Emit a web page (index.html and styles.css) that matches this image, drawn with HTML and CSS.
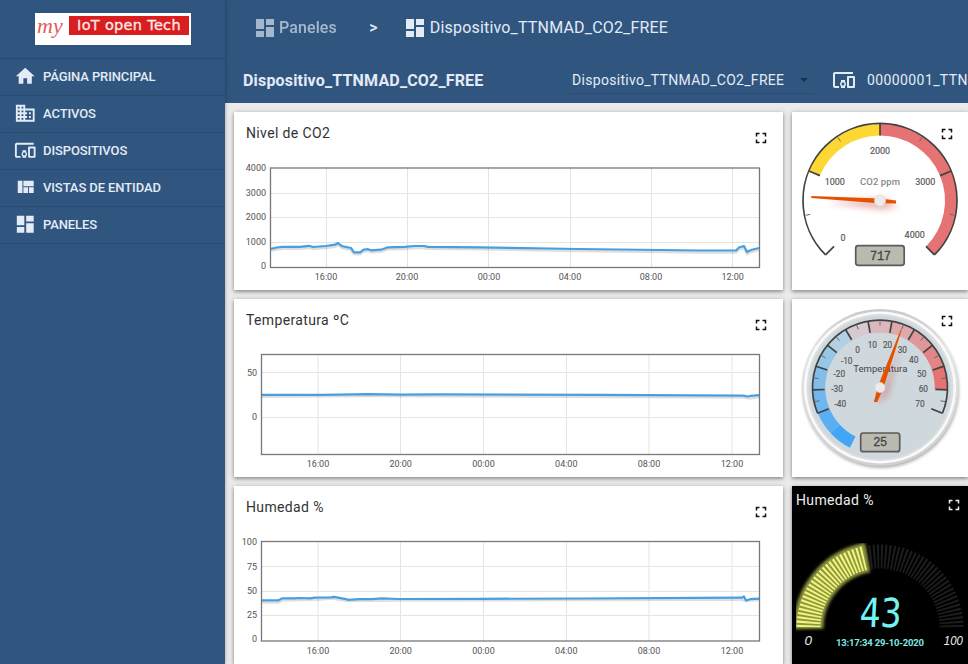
FILE: index.html
```html
<!DOCTYPE html>
<html lang="es">
<head>
<meta charset="utf-8">
<title>Dispositivo_TTNMAD_CO2_FREE</title>
<link rel="stylesheet" href="styles.css">
</head>
<body>
<svg class="defs" width="0" height="0" aria-hidden="true">
  <defs>
    <symbol id="i-home" viewBox="0 0 24 24"><path d="M10 20v-6h4v6h5v-8h3L12 3 2 12h3v8z"/></symbol>
    <symbol id="i-domain" viewBox="0 0 24 24"><path d="M12 7V3H2v18h20V7H12zM6 19H4v-2h2v2zm0-4H4v-2h2v2zm0-4H4V9h2v2zm0-4H4V5h2v2zm4 12H8v-2h2v2zm0-4H8v-2h2v2zm0-4H8V9h2v2zm0-4H8V5h2v2zm10 12h-8v-2h2v-2h-2v-2h2v-2h-2V9h8v10zm-2-8h-2v2h2v-2zm0 4h-2v2h2v-2z"/></symbol>
    <symbol id="i-devices" viewBox="0 0 24 24"><path d="M3 6h18V4H3c-1.100 0-2 .9-2 2v12c0 1.100.9 2 2 2h4v-2H3V6zm10 6H9v1.780c-.61.55-1 1.330-1 2.220s.39 1.670 1 2.220V20h4v-1.780c.61-.55 1-1.340 1-2.220s-.39-1.670-1-2.220V12zm-2 5.500c-.83 0-1.500-.67-1.500-1.500s.67-1.500 1.500-1.500 1.500.67 1.500 1.500-.67 1.500-1.500 1.500zM22 8h-6c-.5 0-1 .5-1 1v10c0 .5.5 1 1 1h6c.5 0 1-.5 1-1V9c0-.5-.5-1-1-1zm-1 10h-4v-8h4v8z"/></symbol>
    <symbol id="i-quilt" viewBox="0 0 24 24"><path d="M10 18h5v-6h-5v6zm-6 0h5V5H4v13zm12 0h5v-6h-5v6zM10 5v6h11V5H10z"/></symbol>
    <symbol id="i-dashboard" viewBox="0 0 24 24"><path d="M3 13h8V3H3v10zm0 8h8v-6H3v6zm10 0h8V11h-8v10zm0-18v6h8V3h-8z"/></symbol>
    <symbol id="i-full" viewBox="0 0 24 24"><path d="M7 14H5v5h5v-2H7v-3zm-2-4h2V7h3V5H5v5zm12 7h-3v2h5v-5h-2v3zM14 5v2h3v3h2V5h-5z"/></symbol>
    <filter id="soft" x="-50%" y="-200%" width="200%" height="500%"><feGaussianBlur stdDeviation="3"/></filter>
    <filter id="glow" x="-20%" y="-20%" width="140%" height="140%"><feGaussianBlur stdDeviation="1.6"/></filter>
  </defs>
</svg>
<div class="app">
  <nav class="sidebar">
    <div class="brand"><div class="logo"><span class="logo-my">my</span><span class="logo-box">IoT open Tech</span></div></div>
    <a class="item"><svg><use href="#i-home"/></svg><span>PÁGINA PRINCIPAL</span></a>
    <a class="item"><svg><use href="#i-domain"/></svg><span>ACTIVOS</span></a>
    <a class="item"><svg><use href="#i-devices"/></svg><span>DISPOSITIVOS</span></a>
    <a class="item"><svg><use href="#i-quilt"/></svg><span>VISTAS DE ENTIDAD</span></a>
    <a class="item last"><svg><use href="#i-dashboard"/></svg><span>PANELES</span></a>
  </nav>
  <main class="main">
    <header class="header">
      <div class="crumbs">
        <span class="crumb dim"><svg><use href="#i-dashboard"/></svg>Paneles</span>
        <span class="sep">&gt;</span>
        <span class="crumb"><svg><use href="#i-dashboard"/></svg><span class="current">Dispositivo_TTNMAD_CO2_FREE</span></span>
      </div>
      <div class="toolbar">
        <h1>Dispositivo_TTNMAD_CO2_FREE</h1>
        <div class="select"><span>Dispositivo_TTNMAD_CO2_FREE</span><i class="caret"></i></div>
        <div class="entity"><svg><use href="#i-devices"/></svg><span>00000001_TTNMAD</span></div>
      </div>
    </header>
    <section class="grid">
      <article class="card">
        <div class="card-head"><h2>Nivel de CO2</h2><svg class="full"><use href="#i-full"/></svg></div>
        <svg class="plot" viewBox="234 158 549 132">
          <path class="gridline" d="M270 193.500H760M270 217.500H760M270 242.500H760M326.500 167V268M407.500 167V268M488.500 167V268M570.500 167V268M651.500 167V268M732.500 167V268"/>
          <g class="series">
            <path class="shade" transform="translate(0 2)" d="M271 248.800L277 247.500L282 246.800H300L309 245.800L313 247L326 246L335 244.700L338 243L342 246.200L351 248L354 252.300H360L364 249.500L368 249.200L371 250.300L381 249.700L388 247.300L405 246.900L414 246H424L428 246.800L480 247.300L578 249L700 250.500H736L739 247.500L744 246L747 252L751 250L759 248"/>
            <path class="line" d="M271 248.800L277 247.500L282 246.800H300L309 245.800L313 247L326 246L335 244.700L338 243L342 246.200L351 248L354 252.300H360L364 249.500L368 249.200L371 250.300L381 249.700L388 247.300L405 246.900L414 246H424L428 246.800L480 247.300L578 249L700 250.500H736L739 247.500L744 246L747 252L751 250L759 248"/>
          </g>
          <rect class="frame" x="270.500" y="168" width="489" height="99.500"/>
          <g class="ylab"><text x="266" y="171">4000</text><text x="266" y="196">3000</text><text x="266" y="220">2000</text><text x="266" y="245">1000</text><text x="266" y="269">0</text></g>
          <g class="xlab"><text x="326" y="280">16:00</text><text x="407" y="280">20:00</text><text x="489" y="280">00:00</text><text x="570" y="280">04:00</text><text x="651" y="280">08:00</text><text x="732.700" y="280">12:00</text></g>
        </svg>
      </article>
      <article class="card gauge">
        <svg class="dial" viewBox="0 0 176 178">
          <g transform="translate(88 88.500)">
            <g fill="none" stroke-width="12">
              <path d="M-65.600 -27.200A71 71 0 0 1 0 -71" stroke="#fdd835"/>
              <path d="M0 -71A71 71 0 0 1 50.200 50.200" stroke="#e57373"/>
            </g>
            <path class="rim" d="M-54.400 54.400A77 77 0 1 1 54.400 54.400"/>
            <g class="major"><path d="M0-65V-77" transform="rotate(-135)"/><path d="M0-65V-77" transform="rotate(-67.500)"/><path d="M0-65V-77"/><path d="M0-65V-77" transform="rotate(67.500)"/><path d="M0-65V-77" transform="rotate(135)"/></g>
            <g class="minor"><path d="M0-71V-76" transform="rotate(-101.250)"/><path d="M0-71V-76" transform="rotate(-33.750)"/><path d="M0-71V-76" transform="rotate(33.750)"/><path d="M0-71V-76" transform="rotate(101.250)"/></g>
          </g>
          <g class="nums"><text x="88" y="42">2000</text><text x="42.800" y="72.500">1000</text><text x="133.300" y="72.500">3000</text><text x="51" y="129">0</text><text x="122.700" y="126">4000</text></g>
          <text class="unit" x="88" y="72.500" textLength="40">CO2 ppm</text>
          <path class="needle-shade" d="M35 91L92 86L106 95L90 98z"/>
          <path d="M19.300 84L88 86.500L104 88.500V91.500L86 91.200L19.300 86z" fill="#e65100"/>
          <circle class="hub" cx="88" cy="88.700" r="5.500"/>
          <rect class="lcd" x="63.700" y="133.700" width="48.500" height="19.600" rx="2.500"/>
          <text class="digits" x="88.500" y="147.700" textLength="21" font-size="12">717</text>
        </svg>
        <svg class="full corner"><use href="#i-full"/></svg>
      </article>

      <article class="card">
        <div class="card-head"><h2>Temperatura ºC</h2><svg class="full"><use href="#i-full"/></svg></div>
        <svg class="plot" viewBox="234 345 549 132">
          <path class="gridline" d="M261 372.500H760M261 417.500H760M318 354V455M400.500 354V455M483.500 354V455M566.500 354V455M649 354V455M732 354V455"/>
          <g class="series">
            <path class="shade" d="M262 396.700L366 396L743 397.400L750 398.500L759 397"/>
            <path class="line" d="M262 394.900h60l16-.3 30-.4 32 .4 40-.2 160 .4 143 .8 5 .9 3-.7 8-.6"/>
          </g>
          <rect class="frame" x="261.500" y="354.500" width="498" height="100"/>
          <g class="ylab"><text x="257" y="375.500">50</text><text x="257" y="420">0</text></g>
          <g class="xlab"><text x="318" y="467">16:00</text><text x="400.700" y="467">20:00</text><text x="483.500" y="467">00:00</text><text x="566.300" y="467">04:00</text><text x="649" y="467">08:00</text><text x="732" y="467">12:00</text></g>
        </svg>
      </article>
      <article class="card gauge">
        <svg class="dial" viewBox="0 0 176 178">
          <defs>
            <linearGradient id="bezel" x1="0" y1="0" x2="0" y2="1"><stop offset="0" stop-color="#c9c9c9"/><stop offset=".25" stop-color="#e6e6e6"/><stop offset="1" stop-color="#d0d0d0"/></linearGradient>
            <path id="seg" d="M0-61A61 61 0 0 1 21.500-57.100"/>
            <path id="maj" d="M0-55.500V-67.500"/>
            <path id="min" d="M0-62V-67"/>
          </defs>
          <circle cx="89" cy="91" r="78" fill="#777" opacity=".55" filter="url(#glow)"/>
          <g transform="translate(88 88.500)">
            <circle r="78.500" fill="url(#bezel)"/>
            <circle r="76" fill="#fafafa"/>
            <circle r="73.500" fill="#dcdfe0"/>
            <circle r="71.500" fill="#cfd8dc"/>
            <g fill="none" stroke-width="12.500">
              <use href="#seg" transform="rotate(-153.400)" stroke="#42a5f5"/>
              <use href="#seg" transform="rotate(-132.950)" stroke="#5aaef1"/>
              <use href="#seg" transform="rotate(-112.500)" stroke="#6fb7ee"/>
              <use href="#seg" transform="rotate(-92.050)" stroke="#82bdea"/>
              <use href="#seg" transform="rotate(-71.600)" stroke="#98c6e6"/>
              <use href="#seg" transform="rotate(-51.150)" stroke="#b3cfe1"/>
              <use href="#seg" transform="rotate(-30.700)" stroke="#d6c9cf"/>
              <use href="#seg" transform="rotate(-10.250)" stroke="#dab9be"/>
              <use href="#seg" transform="rotate(10.200)" stroke="#dda9ad"/>
              <use href="#seg" transform="rotate(30.650)" stroke="#df979a"/>
              <use href="#seg" transform="rotate(51.100)" stroke="#e28588"/>
              <use href="#seg" transform="rotate(71.550)" stroke="#e57373"/>
            </g>
            <path class="rim" d="M-62.400 25.800A67.500 67.500 0 1 1 62.400 25.800"/>
            <g class="major"><use href="#maj" transform="rotate(-112.500)"/><use href="#maj" transform="rotate(-92.050)"/><use href="#maj" transform="rotate(-71.600)"/><use href="#maj" transform="rotate(-51.150)"/><use href="#maj" transform="rotate(-30.700)"/><use href="#maj" transform="rotate(-10.250)"/><use href="#maj" transform="rotate(10.200)"/><use href="#maj" transform="rotate(30.650)"/><use href="#maj" transform="rotate(51.100)"/><use href="#maj" transform="rotate(71.550)"/><use href="#maj" transform="rotate(92)"/><use href="#maj" transform="rotate(112.500)"/></g>
            <g class="minor"><use href="#min" transform="rotate(-102.300)"/><use href="#min" transform="rotate(-81.800)"/><use href="#min" transform="rotate(-61.400)"/><use href="#min" transform="rotate(-40.900)"/><use href="#min" transform="rotate(-20.500)"/><use href="#min"/><use href="#min" transform="rotate(20.500)"/><use href="#min" transform="rotate(40.900)"/><use href="#min" transform="rotate(61.400)"/><use href="#min" transform="rotate(81.800)"/><use href="#min" transform="rotate(102.300)"/></g>
          </g>
          <g class="nums small"><text x="48.300" y="107.700">-40</text><text x="45" y="92.700">-30</text><text x="47.300" y="77.700">-20</text><text x="54.700" y="64.500">-10</text><text x="65.700" y="53.500">0</text><text x="80.300" y="48.500">10</text><text x="95.600" y="48.500">20</text><text x="110.300" y="53.500">30</text><text x="121.700" y="63.500">40</text><text x="129.700" y="77.700">50</text><text x="131.300" y="92.700">60</text><text x="128" y="107.700">70</text></g>
          <text class="unit dark" x="88.300" y="72.700" textLength="54">Temperatura</text>
          <path class="needle-shade" d="M90 92L108 50L96 97L84 105z"/>
          <path d="M109.800 30.700L91 90L85.300 103H81.900L86 87L108.700 30.700z" fill="#e65100"/>
          <circle class="hub" cx="88" cy="88.500" r="5"/>
          <rect class="lcd" x="68.700" y="134" width="39" height="18.700" rx="2.500"/>
          <text class="digits" x="88.300" y="147.300" textLength="14" font-size="12">25</text>
        </svg>
        <svg class="full corner"><use href="#i-full"/></svg>
      </article>

      <article class="card">
        <div class="card-head"><h2>Humedad %</h2><svg class="full"><use href="#i-full"/></svg></div>
        <svg class="plot" viewBox="234 532 549 132">
          <path class="gridline" d="M261 566.500H760M261 591.500H760M261 615.500H760M318 541V641M400.500 541V641M483.500 541V641M566.500 541V641M649 541V641M732 541V641"/>
          <g class="series">
            <path class="shade" d="M262 602.500H278L283 600.500L320 599.500L332 598.600L347 601L400 600.600L740 599.500L746 601L759 600"/>
            <path class="line" d="M262 600.400h16l4-2h12l6-.4 10 .3 5-.6 16-.3 3-.6 12 2.300 2 .7 12-.7h12l10-.7 16 .6 85-.2 100-.3 157-.8h2l2-1.200 2 4 4-1.300 10-.6"/>
          </g>
          <rect class="frame" x="261.500" y="541.500" width="498" height="99.500"/>
          <g class="ylab"><text x="257" y="545">100</text><text x="257" y="570">75</text><text x="257" y="594">50</text><text x="257" y="618">25</text><text x="257" y="642">0</text></g>
          <g class="xlab"><text x="318" y="654">16:00</text><text x="400.700" y="654">20:00</text><text x="483.500" y="654">00:00</text><text x="566.300" y="654">04:00</text><text x="649" y="654">08:00</text><text x="732" y="654">12:00</text></g>
        </svg>
      </article>
      <article class="card gauge black">
        <svg class="dial" viewBox="0 0 176 178">
          <g transform="translate(88 142)" fill="none">
            <path d="M-71.500 0A71.500 71.500 0 0 1 71.500 0" pathLength="180" stroke="#1c1d1f" stroke-width="24" stroke-dasharray="1.500 1.500" stroke-dashoffset="-.75"/>
            <path d="M-71.500 1A71.500 71.500 0 0 1 -12.500 -70.400" stroke="#8f9440" stroke-width="30" filter="url(#glow)"/>
            <path d="M-71.500 0A71.500 71.500 0 0 1 -14.900 -69.900" pathLength="78" stroke="#edf57c" stroke-width="24" stroke-dasharray="1.600 1.400" stroke-dashoffset="-.7"/>
          </g>
          <text class="led big" transform="translate(88 140.500) skewX(-3)" textLength="42" lengthAdjust="spacingAndGlyphs">43</text>
          <text class="led end" x="16.300" y="158.700">0</text>
          <text class="led end" x="161.300" y="158.700" textLength="19" lengthAdjust="spacingAndGlyphs">100</text>
          <text class="stamp" x="88" y="160" textLength="88">13:17:34 29-10-2020</text>
        </svg>
        <h2 class="over">Humedad %</h2>
        <svg class="full corner low"><use href="#i-full"/></svg>
      </article>
    </section>
  </main>
</div>
</body>
</html>
```
FILE: styles.css
```css
* { box-sizing: border-box; }
body { margin: 0; font-family: Roboto, "Liberation Sans", sans-serif; overflow: hidden; }
.defs { display: block; height: 0; }
.app { display: flex; width: 968px; height: 664px; overflow: hidden; background: #eee; }
svg { display: block; flex: none; fill: currentColor; }
h1, h2 { margin: 0; }

.sidebar { width: 225px; flex: none; background: #305680; color: #e3ebf5; z-index: 1; box-shadow: 0 0 4px rgba(0,0,0,.35); }
.brand { height: 58px; padding: 13px 0 0 35px; }
.logo { width: 156px; height: 32px; background: #fff; display: flex; align-items: flex-start; }
.logo-my { width: 34px; flex: none; padding: 3px 0 0 2px; color: #df5c5c; font: italic 22px/20px "Liberation Serif", serif; }
.logo-box { width: 120px; height: 19px; margin-top: 3px; background: #d81e1e; color: #ffe9e9; font: 14.500px/18px "DejaVu Sans", sans-serif; text-align: center; white-space: nowrap; letter-spacing: .3px; -webkit-text-stroke: .3px #ffe9e9; }
.item { height: 37px; display: flex; align-items: center; gap: 6.500px; padding: 0 0 2px 14px; border-top: 1px solid #294b72; font-size: 13px; font-weight: 500; letter-spacing: -.1px; white-space: nowrap; }
.item.last { height: 38px; border-bottom: 1px solid #294b72; }
.item svg { width: 22.500px; height: 22.500px; }

.main { width: 743px; flex: none; display: flex; flex-direction: column; }
.header { height: 103px; flex: none; background: #305680; color: #e3ebf5; overflow: hidden; }
.crumbs { height: 56px; display: flex; align-items: center; padding: 0 0 1px 28px; font-size: 16px; }
.crumb { display: flex; align-items: center; gap: 2px; white-space: nowrap; }
.crumb svg { width: 24px; height: 24px; }
.dim { opacity: .65; font-weight: 500; letter-spacing: .1px; }
.sep { width: 66px; padding-left: 7px; text-align: center; font-weight: 500; }
.current { letter-spacing: .18px; margin-left: 1px; }
.toolbar { display: flex; height: 48px; align-items: center; padding-left: 18px; white-space: nowrap; }
.toolbar h1 { width: 327px; flex: none; font-size: 16px; font-weight: 700; letter-spacing: .18px; }
.select { width: 245px; flex: none; height: 27px; display: flex; align-items: center; padding: 1px 7px 0 2px; justify-content: space-between; border-bottom: 1px solid #2a4c74; font-size: 14px; letter-spacing: .3px; }
.caret { border: 4px solid transparent; border-top-color: #1b324d; border-bottom: 0; }
.entity { display: flex; flex: none; align-items: center; gap: 11px; padding-left: 17px; font-size: 14px; letter-spacing: .4px; }
.entity svg { width: 24px; height: 24px; }

.grid { display: grid; grid-template-columns: 549px 176px; grid-template-rows: repeat(3, 178px); gap: 9px; padding: 9px 0 0 9px; background: #ebebeb; }
.card { background: #fff; box-shadow: 0 1px 5px rgba(0,0,0,.3), 0 2px 3px rgba(0,0,0,.2); position: relative; color: #222; }
.card-head { height: 46px; display: flex; justify-content: space-between; padding: 12px 13px 0 12px; }
.card h2 { font-size: 14px; line-height: 18px; font-weight: 400; letter-spacing: .36px; color: #333; }
.full { width: 18px; height: 18px; color: #111; }
.card-head .full { margin-top: 5px; }
.corner { position: absolute; top: 13px; right: 12px; }
.black { background: #000; }
.black .low { top: 10px; right: 5px; color: #eee; }
.black .over { position: absolute; left: 4px; top: 5px; color: #eee; }
.plot { width: 549px; height: 132px; }
.gridline { fill: none; stroke: #e4e4e4; }
.frame { fill: none; stroke: #777; stroke-width: 1.300; }
.line { fill: none; stroke: #489fdf; stroke-width: 2.200; stroke-linejoin: round; }
.shade { fill: none; stroke: #000; stroke-opacity: .13; stroke-width: 2.500; }
.ylab, .xlab { font-size: 9px; fill: #545454; }
.ylab { text-anchor: end; }
.xlab { text-anchor: middle; }

.dial { width: 176px; height: 178px; }
.dial text { text-anchor: middle; }
.rim { fill: none; stroke: #424242; stroke-width: 1.700; }
.major { stroke: #424242; stroke-width: 1.700; }
.minor { stroke: #666; stroke-width: .9; }
.nums { font-size: 9px; fill: #555; stroke: #555; stroke-width: .15; }
.small { font-size: 8.300px; }
.unit { font-size: 9.500px; font-weight: 500; fill: #888; }
.dark { font-weight: 400; fill: #444; }
.needle-shade { fill: #c02020; opacity: .3; filter: url(#soft); }
.hub { fill: #ececec; stroke: #ddd; stroke-width: .8; }
.lcd { fill: #babab0; stroke: #5b5b5b; stroke-width: 1.700; }
.digits { font-family: "Liberation Mono", monospace; font-weight: 400; fill: #444; stroke: #444; stroke-width: .3; }
.led { font-family: "DejaVu Sans Mono", monospace; fill: #74f3f5; }
.big { font-size: 40px; }
.end { font-family: "Liberation Sans", sans-serif; font-size: 13.500px; font-style: italic; fill: #eee; }
.stamp { font-size: 9.500px; font-weight: 700; fill: #7fe9e4; }
```
